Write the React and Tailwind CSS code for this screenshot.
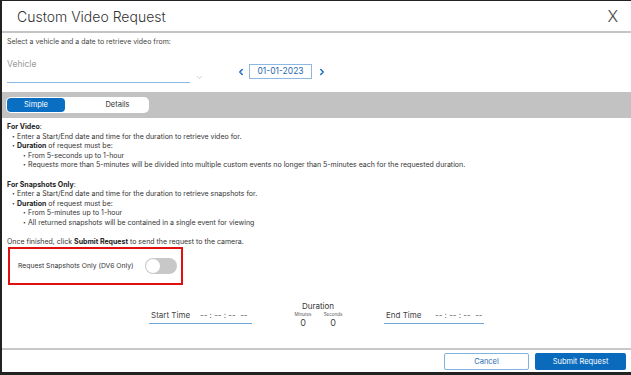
import { ChevronDown, ChevronLeft, ChevronRight } from 'lucide-react';

const font = { fontFamily: 'Inter, "Noto Sans", sans-serif' };

const Bullet = ({ children, sub }) => (
  <div className={`flex ${sub ? 'pl-[16px]' : 'pl-[5px]'}`}>
    <span className="w-[5px] shrink-0 text-[5px]">•</span>
    <span>{children}</span>
  </div>
);

const TimeField = ({ label, width }) => (
  <div
    className={`mt-[9px] h-[14px] ${width} border-b border-[#6fa8dc] flex items-start pl-[2px] text-[8px] leading-[10px] text-[#444] whitespace-nowrap`}
  >
    <span className="w-[49px]">{label}</span>
    <span className="text-[#555]">-- : -- : --&nbsp;&nbsp;--</span>
  </div>
);

export default function App() {
  return (
    <div
      style={font}
      className="w-[631px] h-[375px] bg-white border-l-2 border-t border-b-[3px] border-[#222] flex flex-col text-[#333] overflow-hidden"
    >
      {/* Header */}
      <div className="h-[32px] shrink-0 flex items-center justify-between pl-[15px] pr-[13px] border-b-2 border-[#c4c4c4]">
        <h1 className="text-[14px] font-light text-[#333]">Custom Video Request</h1>
        <span className="text-[16px] font-light text-[#444]">X</span>
      </div>

      {/* Vehicle + date */}
      <div className="h-[59px] shrink-0 px-[5px]">
        <p className="mt-[4px] text-[7px] leading-[10px] text-[#444]">
          Select a vehicle and a date to retrieve video from:
        </p>
        <div className="flex items-start mt-[12px]">
          <div className="w-[183px] h-[24px] border-b border-[#8cb8e2] text-[8.5px] leading-[11px] text-[#999]">
            Vehicle
          </div>
          <ChevronDown size={9} strokeWidth={1.2} className="ml-[5px] mt-[14px] text-[#999]" />
          <div className="ml-[32px] mt-[5px] flex items-center">
            <ChevronLeft size={10} strokeWidth={3.5} className="text-[#1769b8]" />
            <div className="ml-[3px] w-[63px] h-[15px] border border-[#8cb8e2] flex items-center justify-center text-[8.5px] text-[#2a6aad]">
              01-01-2023
            </div>
            <ChevronRight size={10} strokeWidth={3.5} className="ml-[5px] text-[#1769b8]" />
          </div>
        </div>
      </div>

      {/* Tabs band */}
      <div className="h-[26px] shrink-0 bg-[#c2c2c2] flex items-center pl-[4px]">
        <div className="w-[143px] h-[16px] bg-white rounded-[5px] flex items-center p-[1px]">
          <div className="w-[58px] h-full bg-[#0a6fc2] rounded-[4px] flex items-center justify-center text-[7.5px] text-white">
            Simple
          </div>
          <div className="flex-1 flex items-center justify-center pl-[22px] text-[7.5px] text-[#333]">Details</div>
        </div>
      </div>

      {/* Instructions */}
      <div className="flex-1 px-[5px] pt-[4px] text-[7px] leading-[9.6px] text-[#333]">
        <div>
          <b className="font-bold text-[#222]">For Video</b>:
        </div>
        <Bullet>Enter a Start/End date and time for the duration to retrieve video for.</Bullet>
        <Bullet>
          <b className="font-bold text-[#222]">Duration</b> of request must be:
        </Bullet>
        <Bullet sub>From 5-seconds up to 1-hour</Bullet>
        <Bullet sub>
          Requests more than 5-minutes will be divided into multiple custom events no longer than 5-minutes each for
          the requested duration.
        </Bullet>
        <div className="h-[9.6px]" />
        <div>
          <b className="font-bold text-[#222]">For Snapshots Only</b>:
        </div>
        <Bullet>Enter a Start/End date and time for the duration to retrieve snapshots for.</Bullet>
        <Bullet>
          <b className="font-bold text-[#222]">Duration</b> of request must be:
        </Bullet>
        <Bullet sub>From 5-minutes up to 1-hour</Bullet>
        <Bullet sub>All returned snapshots will be contained in a single event for viewing</Bullet>
        <div className="h-[9.6px]" />
        <div>
          Once finished, click <b className="font-bold text-[#222]">Submit Request</b> to send the request to the camera.
        </div>

        {/* Snapshot toggle */}
        <div className="ml-[1px] w-[175px] h-[38px] border-2 border-[#e01010] flex items-center pl-[8px]">
          <span className="text-[6.8px] text-[#333] whitespace-nowrap">Request Snapshots Only (DV6 Only)</span>
          <div className="ml-auto mr-[4px] w-[32px] h-[16px] rounded-full bg-[#c8c8c8] flex items-center p-[1px]">
            <div className="w-[14px] h-[14px] rounded-full bg-white" />
          </div>
        </div>

        {/* Times */}
        <div className="flex items-start mt-[16px]">
          <div className="ml-[142px]">
            <TimeField label="Start Time" width="w-[103px]" />
          </div>
          <div className="ml-[36px] w-[60px] flex flex-col items-center">
            <span className="text-[8px] leading-[10px] text-[#333]">Duration</span>
            <div className="flex w-full">
              <div className="w-[30px] flex flex-col items-center">
                <span className="text-[4.5px] leading-[7px] text-[#555]">Minutes</span>
                <span className="text-[9px] leading-[10px] text-[#444]">0</span>
              </div>
              <div className="w-[30px] flex flex-col items-center">
                <span className="text-[4.5px] leading-[7px] text-[#555]">Seconds</span>
                <span className="text-[9px] leading-[10px] text-[#444]">0</span>
              </div>
            </div>
          </div>
          <div className="ml-[36px]">
            <TimeField label="End Time" width="w-[100px]" />
          </div>
        </div>
      </div>

      {/* Footer */}
      <div className="h-[24px] shrink-0 border-t-2 border-[#c8c8c8] flex items-start justify-end gap-[6px] pt-[3px] pr-[5px]">
        <button className="w-[85px] h-[17px] border border-[#7fb3e0] rounded-[2px] text-[7.5px] text-[#1e6ab4] bg-white">
          Cancel
        </button>
        <button className="w-[91px] h-[17px] rounded-[2px] text-[7.5px] text-white bg-[#0a6bbd]">
          Submit Request
        </button>
      </div>
    </div>
  );
}
